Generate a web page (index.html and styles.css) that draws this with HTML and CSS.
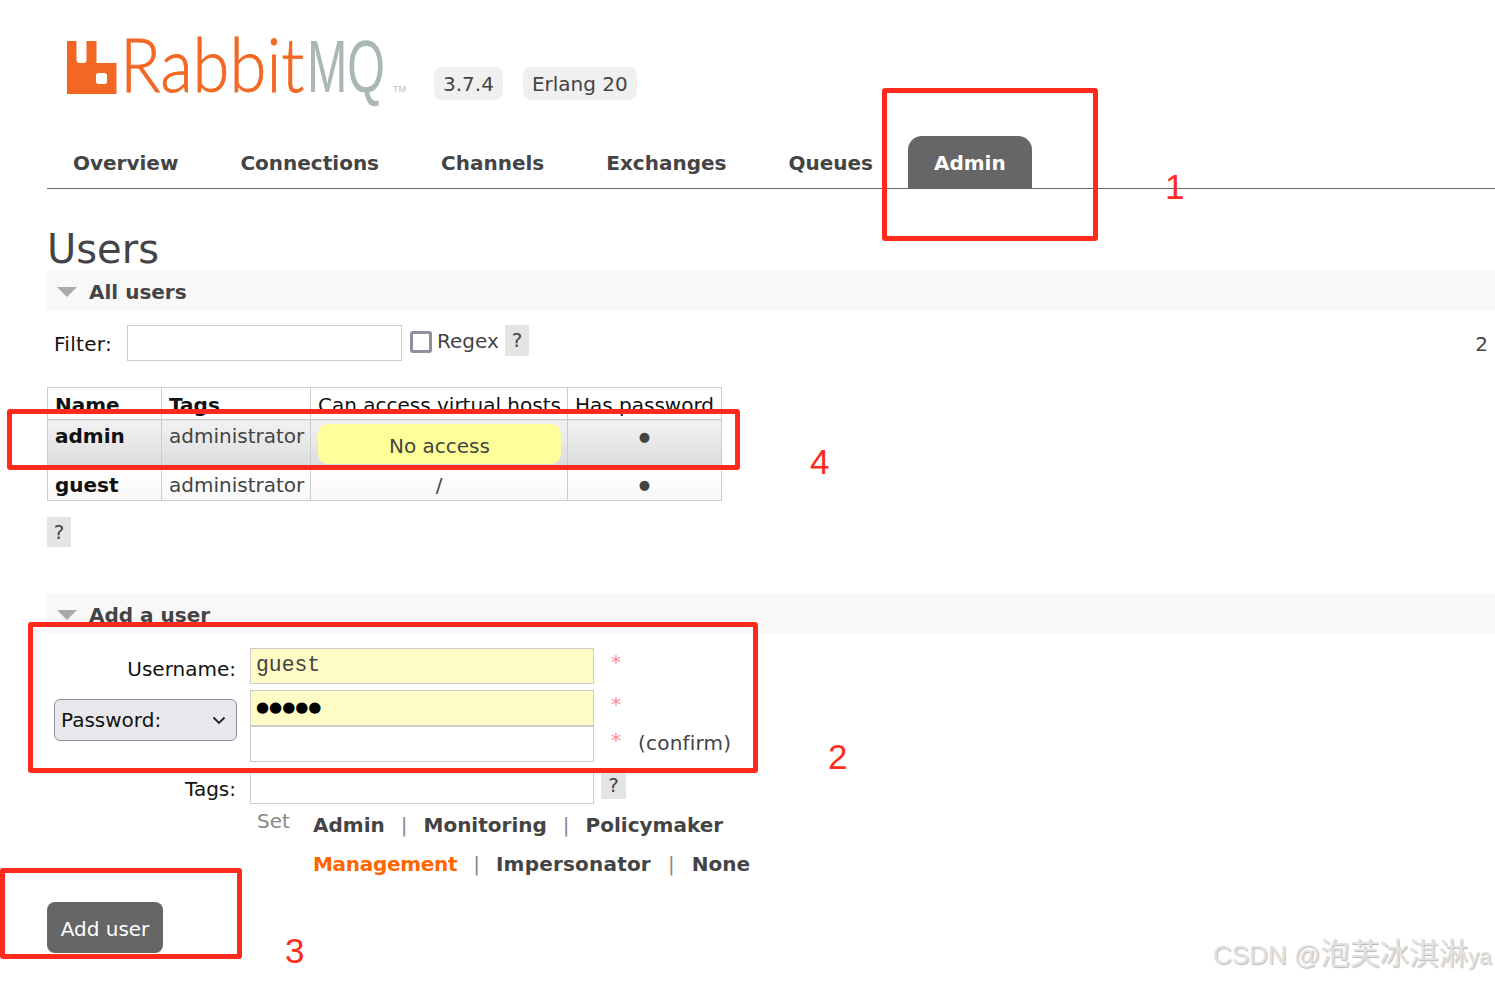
FILE: index.html
```html
<!DOCTYPE html>
<html lang="en">
<head>
<meta charset="utf-8">
<title>RabbitMQ Management</title>
<link rel="stylesheet" href="styles.css">
</head>
<body>
<div class="page">
  <header class="header">
    <svg class="logo" width="345" height="90" viewBox="0 -20 345 90" aria-label="RabbitMQ">
      <path fill="#f26822" d="M0 2h9.500v19c0 2 1 3 3 3h4c2 0 3-1 3-3V2h10v22h20v31H0z"/>
      <rect x="29" y="34" width="11" height="11" rx="2.500" fill="#fff"/>
      <text class="logo-word logo-rabbit" transform="translate(53 53) scale(.905 1)">Rabbit</text>
      <text class="logo-mq" transform="translate(240 53) scale(.655 1)">MQ</text>
      <text class="logo-tm" x="326" y="53">TM</text>
    </svg>
    <span class="badge">3.7.4</span>
    <span class="badge">Erlang 20</span>
  </header>

  <nav class="nav">
    <a class="nav-link">Overview</a>
    <a class="nav-link">Connections</a>
    <a class="nav-link">Channels</a>
    <a class="nav-link">Exchanges</a>
    <a class="nav-link">Queues</a>
    <a class="nav-link nav-active">Admin</a>
  </nav>

  <h1 class="title">Users</h1>

  <section class="section-head"><span class="arrow"></span><h2>All users</h2></section>

  <div class="filter-row">
    <label class="filter-label">Filter:</label>
    <span class="field filter-input"></span>
    <span class="checkbox"></span>
    <span class="regex">Regex</span>
    <span class="help">?</span>
    <span class="count">2</span>
  </div>

  <table class="users">
    <colgroup><col class="c1"><col class="c2"><col class="c3"><col class="c4"></colgroup>
    <thead>
      <tr><th>Name</th><th>Tags</th><th class="plain">Can access virtual hosts</th><th class="plain">Has password</th></tr>
    </thead>
    <tbody>
      <tr class="row-hover">
        <td class="name">admin</td><td>administrator</td>
        <td class="access"><div class="no-access">No access</div></td>
        <td class="center"><span class="dot">●</span></td>
      </tr>
      <tr class="row-plain">
        <td class="name">guest</td><td>administrator</td>
        <td class="center">/</td>
        <td class="center"><span class="dot">●</span></td>
      </tr>
    </tbody>
  </table>

  <span class="help help-block">?</span>

  <section class="section-head add-head"><span class="arrow"></span><h2>Add a user</h2></section>

  <form class="form">
    <label class="form-label l-user">Username:</label>
    <div class="field mono filled">guest</div>
    <div class="req">*</div>

    <div class="select-wrap">
      <div class="select">Password:
        <svg width="14" height="9" viewBox="0 0 14 9"><path d="M1.500 1.500 7 7l5.500-5.500" fill="none" stroke="#222" stroke-width="1.800"/></svg>
      </div>
    </div>
    <div class="field dots filled">●●●●●</div>
    <div class="req">*</div>
    <div class="field confirm-field"></div>
    <div class="req req-confirm">*<span class="confirm">(confirm)</span></div>

    <label class="form-label l-tags">Tags:</label>
    <div class="field tags-field"></div>
    <div><span class="help help-tags">?</span></div>

    <div class="tag-links">
      <span class="set">Set</span>
      <div class="tag-lines">
        <div class="tag-line"><b>Admin</b><i>|</i><b>Monitoring</b><i>|</i><b>Policymaker</b></div>
        <div class="tag-line"><b class="orange">Management</b><i>|</i><b class="imp">Impersonator</b><i class="sep-wide">|</i><b>None</b></div>
      </div>
    </div>
  </form>

  <button class="submit" type="button">Add user</button>
</div>

<div class="mark mark-1"></div>
<div class="mark mark-2"></div>
<div class="mark mark-3"></div>
<div class="mark mark-4"></div>
<span class="num num-1">1</span>
<span class="num num-2">2</span>
<span class="num num-3">3</span>
<span class="num num-4">4</span>
<div class="watermark">CSDN @<span class="wm-cjk">泡芙冰淇淋</span><span class="wm-tail">ya</span></div>
</body>
</html>
```
FILE: styles.css
```css
* { box-sizing: border-box; }
html, body { margin: 0; padding: 0; background: #fff; }
body {
  position: relative;
  width: 1495px;
  height: 981px;
  overflow: hidden;
  font-family: "DejaVu Sans", Verdana, sans-serif;
  font-size: 20px;
  color: #444;
}
.page { padding-left: 47px; }

.header { display: flex; align-items: flex-start; height: 136px; padding: 19px 0 0 20px; }
.logo { display: block; flex: none; margin-right: 22px; }
.logo-word { font-family: "Lato", sans-serif; font-weight: 300; font-size: 74px; stroke-width: .8px; }
.logo-rabbit { fill: #f26822; stroke: #f26822; }
.logo-mq { font-family: "Liberation Sans", sans-serif; font-size: 74px; fill: #a9b8b1; }
.logo-tm { font-family: "Liberation Sans", sans-serif; font-size: 9px; fill: #b5c0bb; }
.badge {
  margin: 48px 20px 0 0;
  padding: 0 9px;
  height: 33px;
  line-height: 34px;
  border-radius: 8px;
  background: #f0f0f0;
  font-size: 20px;
}

.nav { display: flex; gap: 10px; height: 53px; border-bottom: 1px solid #666; }
.nav-link {
  padding: 0 26px;
  height: 52px;
  line-height: 54px;
  font-size: 20px;
  font-weight: 700;
  color: #444;
}
.nav-active { margin-left: -1px; background: #666; color: #fff; border-radius: 14px 14px 0 0; }

.title { margin: 37px 0 0; height: 45px; font-size: 40px; line-height: 46px; font-weight: 400; color: #444; }

.section-head {
  display: flex;
  align-items: center;
  height: 40px;
  background: #f8f8f8;
  padding-left: 10px;
}
.section-head h2 { margin: 2px 0 0 12px; font-size: 20px; font-weight: 700; color: #444; }
.arrow {
  width: 0; height: 0;
  margin-top: 2px;
  border-left: 10px solid transparent;
  border-right: 10px solid transparent;
  border-top: 10px solid #aaa;
}

.filter-row { position: relative; display: flex; align-items: flex-start; height: 76px; padding: 14px 0 0 7px; }
.filter-label { color: #111; line-height: 38px; width: 73px; letter-spacing: .3px; }
.field { border: 1px solid #ccc; background: #fff; }
.filter-input { width: 275px; height: 36px; }
.checkbox {
  width: 22px; height: 22px;
  margin: 6px 5px 0 8px;
  border: 3px solid #8f8f9d;
  border-radius: 3px;
}
.regex { line-height: 32px; width: 68px; }
.help {
  display: inline-block;
  width: 24px;
  height: 31px;
  line-height: 30px;
  text-align: center;
  background: #e4e4e4;
}
.count { position: absolute; right: 7px; top: 21px; line-height: 24px; }

.users { border-collapse: collapse; table-layout: fixed; width: 674px; }
.c1 { width: 114px; } .c2 { width: 149px; } .c3 { width: 257px; } .c4 { width: 154px; }
.users th, .users td { border: 1px solid #ccc; padding: 0 7px; vertical-align: top; text-align: left; font-size: 20px; white-space: nowrap; }
.users th { height: 31px; padding-top: 3px; line-height: 28px; color: #111; font-weight: 700; }
.users th.plain { font-weight: 400; }
.users td { line-height: 33px; }
.users td.name { font-weight: 700; color: #111; }
.users td.center { text-align: center; }
.row-hover td { height: 48px; background: linear-gradient(#f2f2f2, #dcdcdc); }
.row-plain td { height: 32px; background: linear-gradient(#fff, #f8f8f8); }
.users .row-plain td { padding-top: 2px; line-height: 30px; }
.users td.access { padding: 4px 6px 0 7px; }
.no-access { height: 40px; line-height: 44px; border-radius: 10px; background: #ffff99; text-align: center; }
.dot { display: block; font-size: 13px; color: #444; }

.help-block { display: block; margin-top: 16px; height: 30px; }

.add-head { margin-top: 47px; }

.form {
  display: grid;
  grid-template-columns: 189px 344px 1fr;
  column-gap: 14px;
  grid-auto-rows: auto;
  margin: 14px 0 0;
}
.form-label { text-align: right; color: #111; }
.l-user { line-height: 42px; }
.l-tags { line-height: 42px; }
.filled { background: #fffbc4; }
.form .field { height: 36px; }
.form > .field { margin-bottom: 6px; }
.mono { font-family: "Liberation Mono", monospace; font-size: 21.400px; line-height: 33px; padding-left: 5px; color: #444; }
.dots { font-size: 15px; line-height: 32px; padding-left: 5px; color: #000; margin-bottom: 0 !important; }
.select-wrap { grid-row: span 2; padding-left: 7px; padding-top: 9px; margin-right: -1px; }
.select {
  display: flex; justify-content: space-between; align-items: center;
  height: 42px;
  padding: 0 10px 0 6px;
  border: 1px solid #8f8f9d;
  border-radius: 6px;
  background: #e9e9ed;
  color: #111;
}
.req { color: #ff8a95; padding-left: 3px; line-height: 28px; font-size: 20px; }
.req-confirm { line-height: 28px; }
.confirm { color: #444; margin-left: 17px; letter-spacing: .2px; position: relative; top: 3px; }
.help-tags { height: 26px; margin: 5px 0 0 -7px; width: 25px; line-height: 24px; }
.tags-field { margin-bottom: 0 !important; }

.tag-links { grid-column: 2 / 4; display: flex; margin-top: -5px; }
.set { width: 63px; padding-left: 7px; color: #888; line-height: 32px; }
.tag-lines { padding-top: 5px; }
.tag-line { display: flex; height: 39px; line-height: 30px; }
.tag-line b { font-size: 20px; font-weight: 700; color: #444; }
.tag-line i { font-style: normal; font-weight: 400; color: #888; margin: 0 16px; }
.tag-line b.orange { color: #ff6600; letter-spacing: -.3px; }
.tag-line b.imp { letter-spacing: .2px; }
.tag-line i.sep-wide { margin: 0 17px; }

.submit {
  display: block;
  width: 116px;
  height: 51px;
  margin-top: 14px;
  border: 0;
  border-radius: 8px;
  background: #666;
  color: #fff;
  font-family: inherit;
  font-size: 20px;
  padding: 2px 0 0;
}

.mark { position: absolute; border: 5px solid #ff2a1c; border-radius: 3px; }
.mark-1 { left: 882px; top: 88px; width: 216px; height: 153px; }
.mark-2 { left: 28px; top: 622px; width: 730px; height: 151px; }
.mark-3 { left: 0; top: 868px; width: 242px; height: 91px; }
.mark-4 { left: 7px; top: 409px; width: 733px; height: 61px; }
.num { position: absolute; font-family: "Liberation Sans", sans-serif; font-size: 35px; line-height: 36px; color: #ff2a1c; }
.num-1 { left: 1165px; top: 169px; }
.num-2 { left: 828px; top: 739px; }
.num-3 { left: 285px; top: 933px; }
.num-4 { left: 810px; top: 444px; }
.watermark {
  position: absolute;
  left: 1213px;
  top: 935px;
  font-family: "Liberation Sans", "Noto Sans CJK SC", sans-serif;
  font-size: 26px;
  line-height: 38px;
  white-space: nowrap;
  color: #e2e2e2;
  text-shadow: 1px 1px 1px #bbb;
}
.wm-cjk { font-size: 29.600px; }
.wm-tail { font-size: 22px; }
```
